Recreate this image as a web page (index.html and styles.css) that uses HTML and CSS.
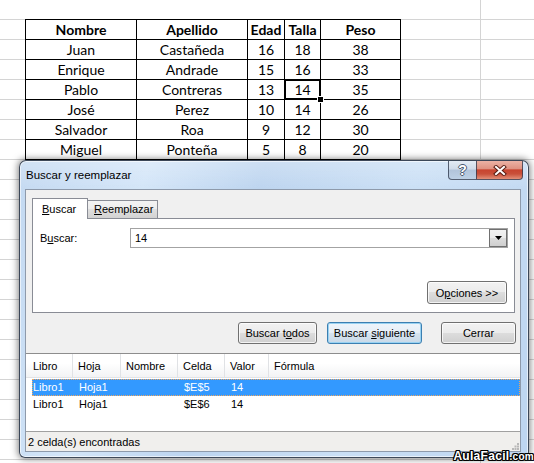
FILE: index.html
```html
<!DOCTYPE html>
<html lang="es">
<head>
<meta charset="utf-8">
<title>Buscar y reemplazar</title>
<link rel="stylesheet" href="styles.css">
</head>
<body>
<div class="sheet">
  <table class="data">
    <tr><th>Nombre</th><th>Apellido</th><th>Edad</th><th>Talla</th><th>Peso</th></tr>
    <tr><td>Juan</td><td>Castañeda</td><td>16</td><td>18</td><td>38</td></tr>
    <tr><td>Enrique</td><td>Andrade</td><td>15</td><td>16</td><td>33</td></tr>
    <tr><td>Pablo</td><td>Contreras</td><td>13</td><td class="sel">14</td><td>35</td></tr>
    <tr><td>José</td><td>Perez</td><td>10</td><td>14</td><td>26</td></tr>
    <tr><td>Salvador</td><td>Roa</td><td>9</td><td>12</td><td>30</td></tr>
    <tr><td>Miguel</td><td>Ponteña</td><td>5</td><td>8</td><td>20</td></tr>
  </table>
</div>

<div class="dialog">
  <div class="titlebar">
    <span class="title">Buscar y reemplazar</span>
    <div class="caption-btns">
      <span class="cap help">?</span>
      <span class="cap close">
        <svg width="14" height="11" viewBox="0 0 14 11">
          <path d="M3 2 L11 9 M11 2 L3 9" stroke="#5a1e14" stroke-width="4" stroke-linecap="square" fill="none"/>
          <path d="M3 2 L11 9 M11 2 L3 9" stroke="#ffffff" stroke-width="2" stroke-linecap="square" fill="none"/>
        </svg>
      </span>
    </div>
  </div>
  <div class="client">
    <div class="tabstrip">
      <div class="tab active"><u>B</u>uscar</div>
      <div class="tab"><u>R</u>eemplazar</div>
    </div>
    <div class="panel">
      <div class="find-row">
        <span class="find-label">B<u>u</u>scar:</span>
        <div class="combo">
          <span class="combo-text">14</span>
          <span class="combo-btn">
            <svg width="7" height="4" viewBox="0 0 7 4"><path d="M0 0 H7 L3.5 4 Z" fill="#000"/></svg>
          </span>
        </div>
      </div>
      <div class="panel-foot">
        <button class="btn opts">O<u>p</u>ciones &gt;&gt;</button>
      </div>
    </div>
    <div class="actions">
      <button class="btn b-todos">Buscar t<u>o</u>dos</button>
      <button class="btn default b-sig">Buscar <u>s</u>iguiente</button>
      <button class="btn b-cerrar">Cerrar</button>
    </div>
    <div class="results">
      <div class="res-head">
        <span>Libro</span><span>Hoja</span><span>Nombre</span><span>Celda</span><span>Valor</span><span>Fórmula</span>
      </div>
      <div class="res-row selected">
        <span>Libro1</span><span>Hoja1</span><span></span><span>$E$5</span><span>14</span><span></span>
      </div>
      <div class="res-row">
        <span>Libro1</span><span>Hoja1</span><span></span><span>$E$6</span><span>14</span><span></span>
      </div>
    </div>
    <div class="statusbar">
      <span>2 celda(s) encontradas</span>
      <svg class="grip" width="7" height="7" viewBox="0 0 7 7">
        <rect x="5" y="0" width="2" height="2" fill="#b8b8b8"/>
        <rect x="2.5" y="2.5" width="2" height="2" fill="#b8b8b8"/>
        <rect x="5" y="2.5" width="2" height="2" fill="#b8b8b8"/>
        <rect x="0" y="5" width="2" height="2" fill="#b8b8b8"/>
        <rect x="2.5" y="5" width="2" height="2" fill="#b8b8b8"/>
        <rect x="5" y="5" width="2" height="2" fill="#b8b8b8"/>
      </svg>
    </div>
  </div>
</div>

<div class="watermark">AulaFacil<span class="dom">.com</span></div>
</body>
</html>
```

FILE: styles.css
```css
* { box-sizing: border-box; }

html, body {
  margin: 0;
  padding: 0;
}

body {
  width: 534px;
  height: 463px;
  overflow: hidden;
  position: relative;
  background: #fff;
  font-family: "Liberation Sans", Arial, sans-serif;
  color: #000;
}

/* ---------- Spreadsheet ---------- */
.sheet {
  width: 534px;
  height: 463px;
  padding: 19px 0 0 25px;
  background-image:
    linear-gradient(to right, transparent 480px, #d4d4d4 480px, #d4d4d4 481px, transparent 481px),
    linear-gradient(to bottom, transparent 19px, #d4d4d4 19px);
  background-size: 100% 100%, 100% 20px;
  background-repeat: no-repeat, repeat-y;
}

.data {
  border-collapse: separate;
  border-spacing: 0;
  table-layout: fixed;
  width: 376px;
  border-top: 1px solid #000;
  border-left: 1px solid #000;
  background: #fff;
  font-family: Lato, "Liberation Sans", sans-serif;
  font-size: 14px;
}

.data th,
.data td {
  height: 20px;
  padding: 0;
  border-right: 1px solid #000;
  border-bottom: 1px solid #000;
  text-align: center;
  line-height: 19px;
  white-space: nowrap;
}

.data th { font-weight: bold; }
.data th:nth-child(1) { width: 111px; }
.data th:nth-child(2) { width: 111px; }
.data th:nth-child(3) { width: 37px; }
.data th:nth-child(4) { width: 36px; }
.data th:nth-child(5) { width: 80px; }

.data .sel { position: relative; }
.data .sel::before {
  content: "";
  position: absolute;
  left: -1px; top: -1px; right: -1px; bottom: -1px;
  border: 2px solid #000;
}
.data .sel::after {
  content: "";
  position: absolute;
  right: -3px;
  bottom: -3px;
  width: 5px;
  height: 5px;
  background: #000;
  outline: 1px solid #fff;
}

/* ---------- Dialog ---------- */
.dialog {
  position: absolute;
  left: 19px;
  top: 160px;
  width: 510px;
  height: 298px;
  border: 1px solid rgba(35, 45, 60, 0.85);
  border-radius: 7px 7px 6px 6px;
  padding: 0 7px 5px 5px;
  display: flex;
  flex-direction: column;
  background:
    linear-gradient(180deg, rgba(255,255,255,0.25), rgba(255,255,255,0) 30px),
    linear-gradient(105deg, #c3d9f1 0%, #d3e5f8 22%, #bcd4ef 42%, #cadff5 68%, #bdd5f0 100%);
  box-shadow: 0 0 7px 1px rgba(0,0,0,0.5), inset 0 0 0 1px rgba(255,255,255,0.6);
}

.titlebar {
  height: 28px;
  flex: none;
  display: flex;
  justify-content: space-between;
  align-items: flex-start;
}

.title {
  font-size: 11.5px;
  line-height: 28px;
  padding-left: 1px;
}

.caption-btns {
  display: flex;
  margin-right: -2px;
}

.cap {
  height: 19px;
  display: flex;
  align-items: center;
  justify-content: center;
  border: 1px solid rgba(50, 60, 80, 0.8);
  border-top: none;
}

.help {
  width: 28px;
  border-right: none;
  border-radius: 0 0 0 4px;
  background: linear-gradient(#e3ebf4, #cfdbe9 45%, #b2c4da 50%, #bdd0e5 100%);
  color: #fff;
  font-weight: bold;
  font-size: 14px;
  line-height: 18px;
  text-shadow: 1px 0 0 #4a5a70, -1px 0 0 #4a5a70, 0 1px 0 #4a5a70, 0 -1px 0 #4a5a70;
}

.close {
  width: 47px;
  border-radius: 0 0 4px 0;
  background: linear-gradient(#ebb2a5, #df9383 42%, #c8442f 50%, #c9503a 72%, #e28f78 100%);
}

.client {
  flex: 1;
  display: flex;
  flex-direction: column;
  background: #f0f0f0;
  border: 1px solid #8e9aab;
  font-size: 11px;
}

/* tabs */
.tabstrip {
  display: flex;
  align-items: flex-end;
  height: 20px;
  margin: 8px 0 0 6px;
  position: relative;
  z-index: 1;
  flex: none;
}

.tab {
  height: 18px;
  width: 71px;
  margin-left: -1px;
  padding-left: 6px;
  border: 1px solid #898c95;
  border-bottom: none;
  line-height: 17px;
  background: linear-gradient(#f3f3f3, #ececec 50%, #dfdfdf 50%, #d2d2d2);
}

.tab.active {
  width: 56px;
  height: 21px;
  margin-left: 0;
  margin-bottom: -1px;
  padding-left: 9px;
  line-height: 20px;
  background: #fff;
  position: relative;
  z-index: 2;
}

.panel {
  flex: none;
  margin-left: 6px;
  width: 483px;
  height: 95px;
  background: #fff;
  border: 1px solid #898c95;
  display: flex;
  flex-direction: column;
  padding: 9px 6px 8px 7px;
}

.find-row {
  display: flex;
  align-items: center;
  height: 20px;
}

.find-label { width: 90px; }

.combo {
  width: 378px;
  height: 20px;
  border: 1px solid #a3a3a3;
  background: #fff;
  display: flex;
  align-items: center;
  justify-content: space-between;
  padding-left: 4px;
}

.combo-btn {
  width: 18px;
  height: 18px;
  border: 1px solid #707070;
  background: linear-gradient(#f2f2f2, #ebebeb 50%, #dddddd 50%, #cfcfcf);
  display: flex;
  align-items: center;
  justify-content: center;
}

.panel-foot {
  margin-top: auto;
  display: flex;
  justify-content: flex-end;
}

/* buttons */
.btn {
  font: inherit;
  font-size: 11px;
  height: 22px;
  padding: 0;
  color: #000;
  border: 1px solid #707070;
  border-radius: 3px;
  background: linear-gradient(#f2f2f2, #ebebeb 50%, #dddddd 50%, #cfcfcf);
  box-shadow: inset 0 0 0 1px rgba(255,255,255,0.75);
}

.btn.opts {
  width: 80px;
  height: 23px;
  margin-right: 1px;
}

.btn.default {
  border-color: #3c7fb1;
  background: linear-gradient(#eef5fb, #e6eef6 50%, #d6e3ef 50%, #c9d9e8);
  box-shadow: inset 0 0 0 1px #98d2f2;
}

.actions {
  flex: none;
  display: flex;
  justify-content: flex-end;
  margin-top: 9px;
  padding-right: 4px;
}

.b-todos { width: 79px; }
.b-sig { width: 95px; margin-left: 10px; }
.b-cerrar { width: 75px; margin-left: 19px; }

/* results list */
.results {
  flex: none;
  margin-top: 9px;
  height: 78px;
  background: #fff;
  border-top: 1px solid #8d8d8d;
}

.res-head {
  display: grid;
  grid-template-columns: 47px 48px 57px 47px 44px 1fr;
  height: 24px;
  background: linear-gradient(#ffffff, #ffffff 40%, #f2f3f4);
  border-bottom: 1px solid #e2e3e5;
}

.res-head span {
  border-right: 1px solid #e0e2e5;
  padding: 1px 0 0 5px;
  line-height: 22px;
}
.res-head span:first-child { padding-left: 7px; }
.res-head span:last-child { border-right: none; }

.res-row {
  display: grid;
  grid-template-columns: 41px 48px 57px 47px 44px 1fr;
  height: 17px;
  margin-left: 6px;
  line-height: 15px;
  border: 1px solid transparent;
  white-space: nowrap;
}
.res-row.selected {
  margin-top: 1px;
  background: #3399ff;
  color: #fff;
  border: 1px dotted #f0a860;
}
.res-row span { padding-left: 5px; }
.res-row span:first-child { padding-left: 0; }

.statusbar {
  flex: 1;
  display: flex;
  justify-content: space-between;
  align-items: center;
  padding-left: 2px;
  border-top: 1px solid #a0a0a0;
  background: #f0efed;
}

.grip {
  align-self: flex-end;
  margin: 0 1px 1px 0;
}

/* watermark */
.watermark {
  position: absolute;
  right: 0;
  bottom: 0;
  font-family: "Liberation Sans", Arial, sans-serif;
  font-weight: bold;
  font-size: 12px;
  line-height: 12px;
  letter-spacing: 0.3px;
  color: #fff;
  text-shadow: 1px 0 0 #000, -1px 0 0 #000, 0 1px 0 #000, 0 -1px 0 #000,
               1px 1px 0 #000, -1px -1px 0 #000, 1px -1px 0 #000, -1px 1px 0 #000;
}
.watermark .dom { font-size: 10px; }
```
